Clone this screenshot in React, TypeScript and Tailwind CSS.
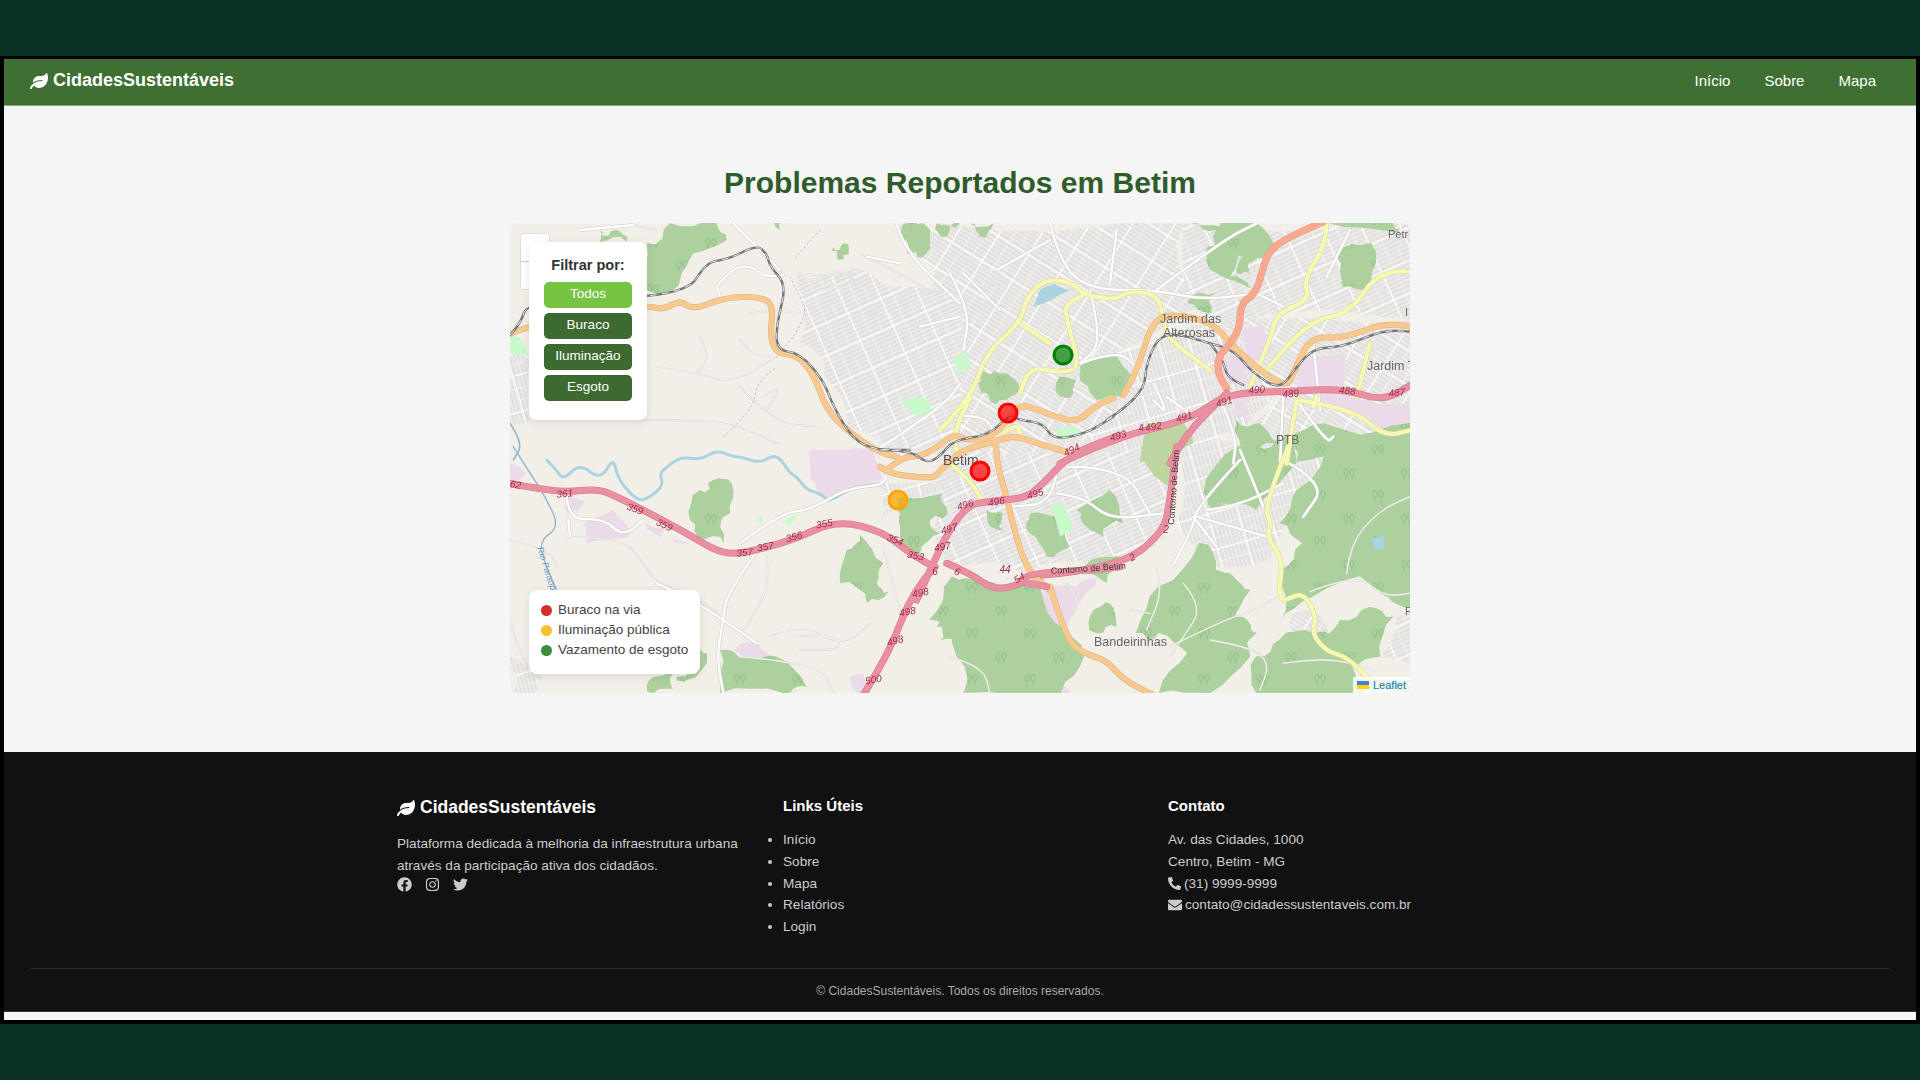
import { FaLeaf, FaFacebook, FaInstagram, FaTwitter, FaPhoneAlt, FaEnvelope } from "react-icons/fa";

type Pt = [number, number];

// zoomed crop coordinates -> page coordinates (svg viewBox is in page px)
const z = (ox: number, oy: number, s: string): Pt[] =>
  s.split(" ").map((p) => {
    const [x, y] = p.split(",").map(Number);
    return [ox + x / 3, oy + y / 3] as Pt;
  });
const Z2 = (s: string) => z(500, 210, s);
const Z3 = (s: string) => z(500, 450, s);
const Z4 = (s: string) => z(950, 210, s);
const Z5 = (s: string) => z(950, 450, s);
const Z11 = (s: string) => z(880, 400, s);
// the whole-map crop is stretched: 1.742x across, 3x down
const O = (s: string): Pt[] =>
  s.split(" ").map((p) => {
    const [x, y] = p.split(",").map(Number);
    return [510 + x / 1.742, 223 + y / 3] as Pt;
  });

const smooth = (p: Pt[]) => {
  if (p.length < 3) return "M" + p.map((q) => q.join(" ")).join("L");
  const mid = (a: Pt, b: Pt) => `${(a[0] + b[0]) / 2} ${(a[1] + b[1]) / 2}`;
  let d = `M${p[0][0]} ${p[0][1]}`;
  for (let i = 1; i < p.length - 1; i++) d += `Q${p[i][0]} ${p[i][1]} ${mid(p[i], p[i + 1])}`;
  const l = p[p.length - 1];
  return d + `L${l[0]} ${l[1]}`;
};

// jagged outline so land areas don't look like smooth blobs
const jag = (p: Pt[], amp = 5, passes = 2) => {
  let cur = p;
  for (let k = 0; k < passes; k++) {
    const next: Pt[] = [];
    cur.forEach((a, i) => {
      const b = cur[(i + 1) % cur.length];
      const h = Math.sin(a[0] * 12.9 + a[1] * 78.2) * 43758.5;
      const r = (h - Math.floor(h) - 0.5) * 2;
      const dx = b[0] - a[0];
      const dy = b[1] - a[1];
      const len = Math.hypot(dx, dy) || 1;
      next.push(a);
      next.push([(a[0] + b[0]) / 2 + (-dy / len) * r * amp, (a[1] + b[1]) / 2 + (dx / len) * r * amp]);
    });
    cur = next;
    amp *= 0.55;
  }
  return "M" + cur.map((q) => q.join(" ")).join("L") + "Z";
};

const urban: [Pt[], string][] = [
  [Z4("-30,40 700,40 720,300 500,420 560,560 300,760 -30,760"), "url(#streets1)"],
  [Z4("700,40 1400,40 1400,330 1100,300 800,330 720,300"), "url(#streets2)"],
  [Z4("500,420 800,330 1000,540 900,640 700,760 300,760 560,560"), "url(#streets3)"],
  [Z4("800,330 1400,330 1400,760 1040,760 900,640 1000,540"), "url(#streets1)"],
  [Z5("-40,-10 680,-10 660,230 520,330 300,340 220,370 0,340 -40,200"), "url(#streets2)"],
  [Z5("700,-10 1140,-10 1040,130 960,330 770,340 680,220"), "url(#streets3)"],
  [Z2("890,190 1060,170 1180,230 1380,240 1380,750 1150,720 1040,640 970,490 900,400"), "url(#streets2)"],
  [Z2("1190,40 1380,40 1380,300 1250,130"), "url(#streets1)"],
  [Z3("1130,100 1340,100 1340,170 1200,140 1140,210"), "url(#streets3)"],
  [Z5("1020,520 1100,490 1140,620 1010,660"), "url(#streets1)"],
  [Z5("1340,500 1380,480 1380,640 1270,620"), "url(#streets2)"],
  [Z2("30,440 90,460 90,630 30,640"), "url(#streets3)"],
  [Z3("30,620 130,680 100,730 30,730"), "url(#streets3)"],
];

const land: Pt[][] = [
  Z3("250,220 340,180 400,240 370,265 260,280"),
  Z3("930,0 1120,0 1145,90 1040,115 990,160 950,130 930,80"),
  Z3("30,40 80,70 30,120"),
  Z3("205,140 255,150 235,190 205,190"),
  Z3("440,220 500,240 490,265 440,240"),
  Z3("510,250 570,280 520,280"),
  Z3("705,600 770,570 810,625 720,625"),
  Z3("1050,680 1090,670 1110,725 1070,725"),
  Z4("810,440 890,430 900,520 830,520"),
  Z4("1040,430 1190,430 1180,540 1040,540"),
  Z4("880,350 940,350 970,420 900,460"),
  Z4("850,560 900,560 890,630 860,620"),
  Z4("1100,550 1240,570 1380,580 1380,700 1280,640 1130,590"),
  Z5("285,400 380,410 440,385 400,440 360,510 310,590 280,500"),
  Z5("270,700 330,680 360,725 290,725"),
  Z5("1260,60 1300,20 1380,30 1370,80 1290,95"),
];

const forest: Pt[][] = [
  Z3("600,120 640,90 695,100 690,190 670,280 610,270 570,210"),
  Z3("1040,300 1080,255 1150,340 1130,400 1165,425 1100,460 1020,400"),
  Z3("660,600 740,620 830,620 920,710 850,730 660,730"),
  Z3("1210,140 1330,130 1340,170 1290,210 1320,250 1260,310 1200,270 1200,190"),
  Z3("460,680 520,670 530,730 460,730"),
  Z3("590,610 620,610 560,690 530,680"),
  Z3("1310,530 1380,480 1380,570 1320,570"),
  Z5("0,395 170,415 250,445 265,525 325,605 240,650 245,730 140,730 140,670 50,585 0,530"),
  O("1370,800 1440,640 1568,600 1568,1130 1480,1060 1400,1120 1340,1200 1340,1040 1380,960 1340,900"),
  O("1340,1250 1400,1230 1460,1290 1490,1410 1300,1410 1300,1300"),
  O("1090,1230 1130,1090 1200,960 1230,1040 1260,1060 1290,1100 1260,1200 1290,1300 1220,1410 1130,1410 1180,1290 1130,1230"),
  O("770,1060 840,1100 930,1060 950,1200 1000,1300 960,1410 790,1410 770,1260 730,1190"),
  O("1230,770 1340,640 1370,720 1300,860 1230,860"),
  O("1230,20 1290,0 1330,60 1290,120 1240,90"),
  O("1180,240 1230,210 1220,270"),
  O("1440,100 1500,60 1500,180 1450,190"),
  O("680,20 720,0 720,100 700,90"),
  O("1000,1030 1060,1000 1040,1080"),
  Z5("1310,350 1385,330 1385,470 1320,450"),
  Z5("1170,510 1260,470 1330,500 1290,620 1200,640 1130,600"),
  Z5("780,510 880,500 920,550 860,640 800,620"),
  Z5("760,130 860,-10 970,-10 920,100 800,180"),
  Z5("380,180 480,120 520,220 460,260 410,230"),
  Z5("240,190 320,200 360,290 290,320 240,250"),
  Z5("430,480 480,460 500,530 440,550"),
  Z5("970,700 1080,640 1180,680 1380,690 1380,730 970,730"),
  Z5("110,180 160,190 160,240 120,230"),
  Z2("440,100 510,40 650,40 680,90 580,130 540,210 490,250 440,240"),
  Z2("300,60 350,60 380,95 300,95"),
  Z2("810,40 860,40 840,62"),
  Z2("1000,110 1030,100 1030,135 1010,140"),
  Z2("1205,60 1250,40 1260,130 1220,130"),
  Z2("1310,40 1380,40 1340,80"),
  Z4("100,470 150,490 210,540 150,570 110,550 95,510"),
  Z4("390,470 500,430 550,500 510,560 440,570 400,520"),
  Z4("330,500 380,510 370,550 320,550"),
  Z4("770,110 860,90 840,200 900,235 800,190"),
  Z4("880,140 940,80 900,200 860,190"),
  Z4("1200,210 1260,210 1230,240"),
  Z4("1120,640 1380,720 1200,755 1040,755 1000,680"),
  Z4("860,630 930,640 980,700 880,755"),
  Z4("720,40 860,40 800,60"),
  Z4("1130,40 1330,40 1350,70"),
  Z4("60,40 130,40 90,80"),
];

const park: Pt[][] = [
  Z5("570,-10 680,-10 670,110 600,60"),
  Z4("590,640 690,630 730,700 640,755 570,755"),
];

const lightGreen: Pt[][] = [
  Z2("30,380 60,380 90,440 30,430"),
  Z2("1200,570 1270,560 1300,600 1250,620"),
  Z5("300,160 340,160 370,240 330,260"),
  Z4("10,440 50,425 60,470 20,490"),
  Z4("310,660 380,650 400,680 340,690"),
  Z3("770,210 790,200 780,225"),
  Z3("850,215 900,185 870,225"),
];

const water: Pt[][] = [Z5("1260,265 1305,255 1300,300 1275,300"), Z4("270,240 310,220 360,240 280,280 250,290")];

const roadsThin: string[] = [
  smooth(Z2("470,470 590,490 700,520 830,440")),
  smooth(Z2("600,380 630,440 590,490")),
  smooth(Z2("745,310 830,300 900,310")),
  smooth(Z2("720,390 760,440 830,440")),
  smooth(Z2("900,190 980,200 1030,175 1080,240")),
  smooth(Z2("200,620 400,630 550,630 700,640 830,700")),
  smooth(Z2("1080,130 1200,190 1300,250")),
  smooth(Z2("720,530 820,640 960,650")),
  smooth(Z2("790,560 850,520 800,600")),
  smooth(Z2("470,60 400,45")),
  smooth(Z2("900,220 1040,180 1070,210 930,250")),
  smooth(Z3("30,270 150,300 170,350")),
  smooth(Z3("205,260 370,265 430,340 470,400 620,460 670,510")),
  smooth(Z3("30,510 60,620 120,690")),
  smooth(Z3("800,320 810,400 760,500 720,550")),
  smooth(Z3("810,560 900,520 1030,590 1110,520")),
  smooth(Z3("1150,300 1180,400 1200,480")),
  smooth(Z3("720,620 960,640 1000,730")),
  smooth(Z3("880,560 1000,550 1030,600 900,600")),
  smooth(Z3("480,400 600,450")),
  smooth(Z5("350,400 400,460 340,520")),
  smooth(Z5("660,590 820,510 920,480 980,440")),
  smooth(Z5("1080,425 1220,370 1300,440 1380,430")),
  smooth(Z5("1190,370 1200,280 1290,180 1380,140")),
  smooth(Z5("780,570 900,590 960,640 930,720")),
  smooth(Z5("1000,640 1130,620 1270,660")),
  smooth(Z5("600,490 540,480")),
  smooth(Z5("0,620 100,650 120,730")),
  smooth(Z5("700,400 760,470 700,560 660,620")),
  smooth(Z5("620,360 640,420 590,540")),
];

const roadsWhite: string[] = [
  smooth(Z3("200,140 205,210 310,205 370,260 430,210")),
  smooth(Z3("205,210 210,260")),
  smooth(Z3("780,290 680,430 670,510 650,620 670,730")),
  smooth(Z3("720,280 840,190 930,180 1040,115 1150,105 1160,70")),
  smooth(Z3("670,510 770,580")),
  smooth(Z3("470,400 560,440 670,510")),
  smooth(Z5("870,30 740,170 730,230 670,345")),
  smooth(Z5("730,200 800,290")),
  smooth(Z5("740,200 950,260")),
  smooth(Z5("320,60 310,160 180,170")),
  smooth(Z5("320,130 400,140 480,210 640,190")),
  smooth(Z5("870,0 940,170")),
  smooth(Z5("350,50 520,50 600,190")),
  smooth(Z5("770,180 860,170 1000,100")),
  smooth(Z5("1000,30 1130,100 1060,200")),
  smooth(Z2("240,60 400,45")),
  smooth(Z2("700,40 840,180")),
  smooth(Z2("1190,40 1210,120 1380,280")),
  smooth(Z2("650,230 700,170 760,170 790,200 850,195")),
  smooth(Z2("650,230 660,260")),
  smooth(Z2("1100,140 1200,160")),
  smooth(Z2("1260,350 1380,320")),
  smooth(Z4("0,190 60,300 40,420")),
  smooth(Z4("300,40 330,160 420,240 620,240 760,270 920,250")),
  smooth(Z4("420,240 460,400 390,460")),
  smooth(Z4("620,240 820,90 920,40")),
  smooth(Z4("140,180 300,90")),
  smooth(Z4("610,520 660,620 610,570")),
  smooth(Z4("390,460 500,420 560,470")),
  smooth(Z4("1040,570 1130,700 1150,680")),
  smooth(Z4("1000,550 990,760")),
  smooth(Z4("820,590 860,680 850,760")),
  smooth(Z2("1130,720 1330,590 1380,520")),
  smooth(Z4("0,620 100,610 140,680")),
  smooth(Z4("920,250 1000,290")),
  smooth(Z4("1090,400 1110,600")),
  smooth(Z4("650,560 760,640")),
  smooth(Z4("1130,200 1200,60")),
  smooth(Z4("500,60 480,220")),
  smooth(Z4("150,300 40,190")),
];

const motorway: Pt[][] = [
  Z3("30,100 180,130 290,115 350,140 430,180 560,250 660,310 730,310 880,270 1010,210 1150,245 1230,310 1300,350"),
  Z11("160,490 235,320 350,300 440,295 500,240 575,160 720,105"),
  Z11("160,490 110,600"),
  Z3("1305,350 1240,420 1170,600 1090,735"),
  Z11("200,490 270,520 340,570 420,555 440,520 640,510 720,500"),
  Z11("420,545 500,560"),
  Z5("280,375 500,355 640,250 660,150 680,-10"),
  Z4("330,760 500,680 720,630 830,550 1000,545 1180,535 1300,575 1390,520"),
  Z4("660,760 700,680 830,550"),
];

const trunk: Pt[][] = [Z4("830,535 780,465 870,370 870,280 920,250 950,130 1000,90 1120,35")];

const primary: Pt[][] = [
  [...Z2("25,375 80,345"), ...Z2("440,285 490,300 540,270 580,300 680,260 790,262 820,290 810,380 830,430 890,435 940,490 980,600 1040,660 1130,725 1190,740")],
  Z11("0,200 25,222 150,235 170,225 240,150 330,130 400,105 470,130 560,155"),
  Z11("20,210 70,170 115,170 160,150 225,100 250,120 330,115 385,60 420,10 500,40 590,70 640,20 700,-5"),
  Z4("520,555 560,490 610,320 700,315 790,340 850,410 940,490 1010,530 1030,490 1080,380 1180,385 1300,340 1390,350"),
  Z11("325,100 350,130 350,190 380,290 400,380 440,510 510,570"),
  Z5("300,410 350,570 400,610 470,630 520,690 610,735"),
];

const secondary: Pt[][] = [
  Z4("-30,660 60,570 110,425 210,340 230,260 290,205 370,220 400,255 500,270 530,245 620,250 640,320 650,385 780,480"),
  Z4("400,255 345,280 350,330 390,470 340,490 240,470 210,550"),
  Z4("210,340 300,400"),
  Z4("1130,35 1130,100 1060,210 1080,270 980,310 960,390 900,530"),
  Z4("1385,185 1290,175 1200,310 1080,330 940,490"),
  Z4("1040,570 1210,595 1300,680 1385,660"),
  Z4("1040,570 1010,760"),
  Z4("1100,560 1090,590"),
  Z4("1260,400 1220,560"),
  Z5("1015,-10 940,170 965,220 950,260 1000,330 985,430 1000,455 1060,425 1100,500 1085,550 1130,605 1190,620 1260,690"),
  Z11("270,-5 220,90 230,150"),
  Z11("210,190 270,240 305,300"),
  Z11("370,100 410,70 420,100"),
];

const rail: Pt[][] = [
  [...Z2("30,375 60,345 85,270"), ...Z2("555,260 620,155 680,150 770,105 800,130 810,170 860,225 830,340 830,420 900,430 970,510 1000,590 1060,690 1130,720 1230,720")],
  Z11("0,150 90,150 140,190 180,170 220,120 330,105 385,45 420,60 490,70 520,120 620,100 700,50"),
  Z4("470,630 580,560 590,450 640,360 780,400 850,420 910,490 990,540 1040,470 1090,415 1180,410 1300,360 1385,365"),
  Z4("780,400 820,450 830,500 880,525"),
];

const rivers: Pt[][] = [
  Z3("140,30 170,60 190,90 240,40 300,90 340,25 350,70 365,100 400,140 430,155 490,110 480,70 490,60 540,20 600,30 650,0 700,20 720,20 780,40 830,10 870,70 890,80 920,120 960,130 990,155 1050,115 1140,100"),
];

// route numbers: [x, y, label, rotation]
const routeNums: [number, number, string, number][] = [
  [515, 488, "62", 10], [565, 497, "361", -5], [634, 512, "359", 20], [663, 528, "359", 25],
  [745, 556, "357", -5], [766, 550, "357", -10], [795, 540, "356", -15], [825, 527, "355", -10],
  [894, 543, "354", 20], [915, 559, "353", 10], [950, 532, "497", -15], [943, 550, "497", -10],
  [921, 596, "498", -10], [908, 615, "498", -10], [896, 644, "498", -15], [874, 683, "500", -10],
  [966, 508, "496", -15], [997, 505, "496", -10], [1036, 497, "495", -15], [1073, 453, "494", -25],
  [1119, 439, "493", -15], [1142, 431, "4", -15], [1154, 430, "492", -10], [1185, 420, "491", -15],
  [1225, 405, "491", -15], [1257, 393, "490", -5], [1291, 397, "489", -5], [1347, 394, "488", 5],
  [1397, 396, "487", -5], [1166, 533, "2", 0], [1134, 560, "2", -30], [1005, 573, "44", 0],
  [1021, 581, "54", -30], [935, 575, "6", 0], [956, 575, "6", 20],
];

const townLabels: [number, number, string, number][] = [
  [1160, 323, "Jardim das", 12.5], [1163, 337, "Alterosas", 12.5], [1367, 370, "Jardim Te", 12.5],
  [1276, 444, "PTB", 12], [1388, 238, "Petr", 11], [1405, 316, "I", 11], [1094, 646, "Bandeirinhas", 12.5],
  [1405, 615, "P", 11],
];

const markers = [
  { x: 1008, y: 413, c: "#ff0000" },
  { x: 980, y: 471, c: "#ff0000" },
  { x: 1063, y: 355, c: "#008000" },
  { x: 898, y: 500, c: "#ffa500" },
];

const Road = ({ lines, casing, fill, w }: { lines: Pt[][]; casing: string; fill: string; w: number }) => (
  <g fill="none" strokeLinecap="round" strokeLinejoin="round">
    {lines.map((l, i) => (
      <path key={"c" + i} d={smooth(l)} stroke={casing} strokeWidth={w + 1.2} />
    ))}
    {lines.map((l, i) => (
      <path key={"f" + i} d={smooth(l)} stroke={fill} strokeWidth={w} />
    ))}
  </g>
);

const StreetPattern = ({ id, rot }: { id: string; rot: number }) => (
  <pattern id={id} width="36" height="30" patternUnits="userSpaceOnUse" patternTransform={`rotate(${rot})`}>
    <rect width="36" height="30" fill="#e2e0de" />
    <path d="M0 2H36M0 6H36M0 10H36M0 14H36M0 18H36M0 22H36M0 26H36" stroke="#f8f7f5" strokeWidth="1" />
    <path d="M12 0V30M24 15V30" stroke="#f8f7f5" strokeWidth="0.8" />
    <path d="M0 0.5H36M35.5 0V30" stroke="#ffffff" strokeWidth="1.6" />
  </pattern>
);

const MapDrawing = () => (
  <svg viewBox="510 223 900 470" className="block w-full h-full" fontFamily="'Liberation Sans', sans-serif">
    <defs>
      <StreetPattern id="streets1" rot={32} />
      <StreetPattern id="streets2" rot={-24} />
      <StreetPattern id="streets3" rot={74} />
      <pattern id="trees" width="58" height="46" patternUnits="userSpaceOnUse">
        <g fill="none" stroke="#8fbb85" strokeWidth="0.9">
          <ellipse cx="12" cy="12" rx="2.2" ry="3.4" />
          <ellipse cx="18" cy="12" rx="2.2" ry="3.4" />
          <path d="M12 15v4M18 15v4" />
          <ellipse cx="41" cy="34" rx="2.2" ry="3.4" />
          <ellipse cx="47" cy="34" rx="2.2" ry="3.4" />
          <path d="M41 37v4M47 37v4" />
        </g>
      </pattern>
      <filter id="soft" x="0" y="0" width="100%" height="100%">
        <feGaussianBlur stdDeviation="0.55" />
      </filter>
    </defs>
    <g filter="url(#soft)">
      <rect x="510" y="223" width="900" height="470" fill="#f2efe9" />
      {urban.map(([p, f], i) => (
        <path key={i} d={jag(p, 8)} fill={f} />
      ))}
      {land.map((p, i) => (
        <path key={i} d={jag(p, 3)} fill="#ebdbe8" />
      ))}
      {park.map((p, i) => (
        <path key={i} d={jag(p, 3)} fill="#bfd5a0" />
      ))}
      {forest.map((p, i) => (
        <g key={i}>
          <path d={jag(p, 7)} fill="#add19e" />
          <path d={jag(p, 7)} fill="url(#trees)" />
        </g>
      ))}
      {lightGreen.map((p, i) => (
        <path key={i} d={jag(p, 1)} fill="#c8facc" />
      ))}
      {water.map((p, i) => (
        <path key={i} d={jag(p, 1)} fill="#aad3df" />
      ))}
      <g fill="none" strokeLinecap="round" strokeLinejoin="round">
        {rivers.map((p, i) => (
          <path key={i} d={smooth(p)} stroke="#aad3df" strokeWidth="3" />
        ))}
        <path d={smooth(Z3("40,-10 90,70 130,130 180,230 120,270 130,330 170,420"))} stroke="#8fb6d0" strokeWidth="1.4" />
        <path d={smooth(Z2("30,640 70,700 40,750"))} stroke="#8fb6d0" strokeWidth="1.6" />
        {roadsThin.map((d, i) => (
          <path key={i} d={d} stroke="#d9d6d0" strokeWidth="1.8" />
        ))}
        {roadsThin.map((d, i) => (
          <path key={i} d={d} stroke="#faf9f7" strokeWidth="0.8" />
        ))}
        {roadsWhite.map((d, i) => (
          <path key={i} d={d} stroke="#cfcdc9" strokeWidth="3.4" />
        ))}
        {roadsWhite.map((d, i) => (
          <path key={i} d={d} stroke="#ffffff" strokeWidth="2.4" />
        ))}
        <path d={smooth(Z2("870,200 900,260 920,300 890,370 830,440"))} stroke="#c9a9c9" strokeWidth="1" strokeDasharray="1.5 3" />
        <path d={smooth(Z2("670,680 760,600 770,520 830,470"))} stroke="#c9a9c9" strokeWidth="1" strokeDasharray="1.5 3" />
        <path d={smooth(Z2("960,60 880,150"))} stroke="#c9a9c9" strokeWidth="1" strokeDasharray="1.5 3" />
      </g>
      <Road lines={secondary} casing="#d9d9a0" fill="#f6f9b4" w={4} />
      <Road lines={primary} casing="#e3b57f" fill="#f8c98f" w={5} />
      <g fill="none" strokeLinecap="round" strokeLinejoin="round">
        {rail.map((p, i) => (
          <path key={i} d={smooth(p)} stroke="#777" strokeWidth="2.4" />
        ))}
        {rail.map((p, i) => (
          <path key={i} d={smooth(p)} stroke="#e8e8e8" strokeWidth="1" strokeDasharray="6 6" />
        ))}
      </g>
      <Road lines={trunk} casing="#ef9d86" fill="#f7a98f" w={6} />
      <Road lines={motorway} casing="#e0788f" fill="#e98fa2" w={5.8} />
      <g fontSize="10" fontStyle="italic" fill="#a02c4a" textAnchor="middle">
        {routeNums.map(([x, y, t, r], i) => (
          <text key={i} x={x} y={y} transform={`rotate(${r} ${x} ${y})`}>
            {t}
          </text>
        ))}
      </g>
      <g fontSize="9" fill="#3a3a3a">
        <text x="1051" y="574" transform="rotate(-4 1051 574)">Contorno de Betim</text>
        <text x="1174" y="525" transform="rotate(-86 1174 525)">Contorno de Betim</text>
      </g>
      <text x="537" y="548" fontSize="9" fontStyle="italic" fill="#6f97bd" transform="rotate(72 537 548)">Rio Paraopeba</text>
      <g fill="#666">
        {townLabels.map(([x, y, t, s], i) => (
          <text key={i} x={x} y={y} fontSize={s}>
            {t}
          </text>
        ))}
        <text x="943" y="465" fontSize="14" fill="#555">Betim</text>
      </g>
      {markers.map((m, i) => (
        <circle key={i} cx={m.x} cy={m.y} r="9" fill={m.c} fillOpacity="0.7" stroke={m.c} strokeWidth="3" />
      ))}
    </g>
  </svg>
);

const filters = ["Todos", "Buraco", "Iluminação", "Esgoto"];
const legend = [
  { c: "bg-[#d32f2f]", t: "Buraco na via" },
  { c: "bg-[#fbc02d]", t: "Iluminação pública" },
  { c: "bg-[#388e3c]", t: "Vazamento de esgoto" },
];
const links = ["Início", "Sobre", "Mapa", "Relatórios", "Login"];

export default function App() {
  return (
    <div className="h-[1080px] overflow-hidden bg-[#0a3226] font-['Liberation_Sans',Arial,sans-serif]">
      <div className="h-[56px]" />
      <div className="h-[968px] bg-black px-[4px] pt-[3px]">
        <nav className="flex h-[47px] items-center justify-between border-b border-[#8aa684] bg-[#3f6f33] pb-[2px] pl-[26px] pr-[40px]">
          <div className="flex items-center gap-[5px] pb-[1px] text-[18px] font-bold text-white">
            <FaLeaf className="text-[18px]" />
            <span>CidadesSustentáveis</span>
          </div>
          <div className="flex gap-[34px] text-[15px] text-white">
            <span>Início</span>
            <span>Sobre</span>
            <span>Mapa</span>
          </div>
        </nav>

        <main className="h-[646px] bg-[#f5f5f5] pt-[58px]">
          <h1 className="text-center text-[30px] leading-[38px] font-bold text-[#2f5c2b]">
            Problemas Reportados em Betim
          </h1>
          <div className="relative mx-auto mt-[21px] h-[470px] w-[900px] overflow-hidden rounded-[8px]">
            <MapDrawing />
            <div className="absolute left-[10px] top-[10px] h-[57px] w-[30px] rounded-[4px] border border-[#ddd] bg-white">
              <div className="mt-[27px] border-t border-[#ccc]" />
            </div>
            <div className="absolute left-[19px] top-[19px] flex h-[178px] w-[118px] flex-col items-center rounded-[8px] bg-white pt-[15px] shadow-[0_2px_10px_rgba(0,0,0,0.1)]">
              <div className="text-[14.5px] leading-[17px] font-bold text-[#333]">Filtrar por:</div>
              <div className="mt-[8px] flex flex-col gap-[5px]">
                {filters.map((f, i) => (
                  <div
                    key={f}
                    className={
                      "flex h-[26px] w-[88px] items-center justify-center rounded-[5px] pb-[2px] text-[13.5px] text-white " +
                      (i === 0 ? "bg-[#76c442]" : "bg-[#3c6a30]")
                    }
                  >
                    {f}
                  </div>
                ))}
              </div>
            </div>
            <div className="absolute left-[19px] top-[367px] flex h-[84px] w-[171px] flex-col justify-center gap-[4px] rounded-[8px] bg-white pb-[4px] pl-[12px] shadow-[0_2px_10px_rgba(0,0,0,0.1)]">
              {legend.map((l) => (
                <div key={l.t} className="flex h-[16px] items-center gap-[6px] text-[13.5px] text-[#444]">
                  <span className={"h-[11px] w-[11px] rounded-full " + l.c} />
                  <span>{l.t}</span>
                </div>
              ))}
            </div>
            <div className="absolute bottom-0 right-0 flex h-[16px] items-center gap-[4px] bg-white/80 px-[4px] text-[11px] text-[#0078a8]">
              <svg width="12" height="8" viewBox="0 0 12 8">
                <path fill="#4c7be1" d="M0 0h12v4H0z" />
                <path fill="#ffd500" d="M0 4h12v4H0z" />
              </svg>
              <span>Leaflet</span>
            </div>
          </div>
        </main>

        <footer className="h-[260px] border-b border-[#333] bg-[#111111] px-[26px] pt-[45px]">
          <div className="mx-[367px] flex">
            <div className="w-[386px] shrink-0">
              <div className="flex items-center gap-[5px] text-[17.5px] leading-[21px] font-bold text-white">
                <FaLeaf className="text-[18px]" />
                <span>CidadesSustentáveis</span>
              </div>
              <p className="mt-[15px] w-[360px] text-[13.6px] leading-[22px] text-[#cccccc]">
                Plataforma dedicada à melhoria da infraestrutura urbana através da participação ativa dos cidadãos.
              </p>
              <div className="mt-[0px] flex items-center gap-[13px] text-[15px] text-[#cccccc]">
                <FaFacebook />
                <FaInstagram />
                <FaTwitter />
              </div>
            </div>
            <div className="w-[385px] shrink-0">
              <h3 className="text-[15px] leading-[18px] font-bold text-white">Links Úteis</h3>
              <ul className="mt-[14px] list-disc text-[13.6px] leading-[21.75px] text-[#cccccc]">
                {links.map((l) => (
                  <li key={l}>{l}</li>
                ))}
              </ul>
            </div>
            <div className="shrink-0">
              <h3 className="text-[15px] leading-[18px] font-bold text-white">Contato</h3>
              <div className="mt-[14px] text-[13.6px] leading-[21.75px] text-[#cccccc]">
                <div>Av. das Cidades, 1000</div>
                <div>Centro, Betim - MG</div>
                <div className="flex items-center gap-[3px]">
                  <FaPhoneAlt className="text-[13px]" />
                  <span>(31) 9999-9999</span>
                </div>
                <div className="flex items-center gap-[3px]">
                  <FaEnvelope className="text-[14px]" />
                  <span>contato@cidadessustentaveis.com.br</span>
                </div>
              </div>
            </div>
          </div>
          <div className="mt-[30px] border-t border-[#2a2a2a] pt-[15px] text-center text-[12px] leading-[15px] text-[#aaaaaa]">
            © CidadesSustentáveis. Todos os direitos reservados.
          </div>
        </footer>
        <div className="h-[8px] bg-[#f5f5f5]" />
      </div>
    </div>
  );
}
